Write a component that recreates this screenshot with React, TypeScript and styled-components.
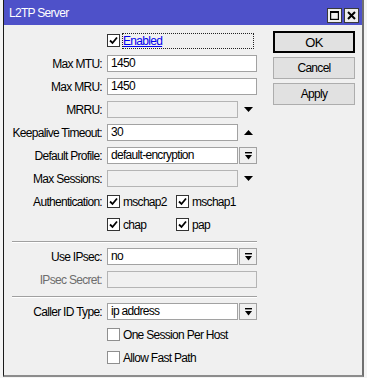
import styled, { createGlobalStyle } from "styled-components";

const GlobalStyle = createGlobalStyle`
  html, body {
    margin: 0;
    padding: 0;
    background: #f4f4f4;
  }
  body {
    font-family: "Liberation Sans", Arial, sans-serif;
    font-size: 12px;
    letter-spacing: -0.7px;
    color: #000;
  }
`;

const Window = styled.div`
  margin-left: 3px;
  width: 361px;
  height: 377px;
  box-sizing: border-box;
  display: flex;
  flex-direction: column;
  background: #f0f0f0;
  border-left: 1px solid #1a1a1a;
  border-right: 2px solid #707070;
  border-bottom: 2px solid #8c8c8c;
`;

const TitleBar = styled.div`
  height: 25px;
  flex: none;
  display: flex;
  align-items: center;
  justify-content: space-between;
  padding: 0 3px 0 5px;
  background: #4e51c9;
  color: #fff;
`;

const TitleText = styled.span`
  font-size: 12px;
  padding-top: 1px;
`;

const TitleButtons = styled.div`
  display: flex;
  gap: 2px;
  margin-top: 5px;
`;

const TitleButton = styled.div`
  width: 15px;
  height: 15px;
  box-sizing: border-box;
  border: 1px solid #3a3a3a;
  background: #eeeeee;
  display: flex;
  align-items: center;
  justify-content: center;
`;

const Body = styled.div`
  flex: 1;
  display: flex;
`;

const Form = styled.div`
  width: 258px;
  padding-top: 4px;
  display: flex;
  flex-direction: column;
`;

const Row = styled.div`
  height: 23px;
  display: flex;
  align-items: center;
`;

const Label = styled.div<{ $disabled?: boolean }>`
  width: 98px;
  padding-right: 5px;
  box-sizing: content-box;
  text-align: right;
  white-space: nowrap;
  color: ${(p) => (p.$disabled ? "#6d6d6d" : "#000")};
`;

const Field = styled.div<{ $short?: boolean; $disabled?: boolean }>`
  width: ${(p) => (p.$short ? "131px" : "150px")};
  height: 17px;
  box-sizing: border-box;
  border: 1px solid ${(p) => (p.$disabled ? "#b4b4b4" : "#a2a2a2")};
  background: ${(p) => (p.$disabled ? "#f0f0f0" : "#fff")};
  padding: 0 3px;
  line-height: 15px;
  white-space: nowrap;
  overflow: hidden;
`;

const ArrowSlot = styled.div`
  width: 19px;
  display: flex;
  justify-content: center;
  padding-left: 1px;
`;

const DropButton = styled.div`
  width: 18px;
  height: 17px;
  margin-left: 1px;
  box-sizing: border-box;
  border: 1px solid #a2a2a2;
  background: #f0f0f0;
  display: flex;
  align-items: center;
  justify-content: center;
`;

const CheckItem = styled.label<{ $width?: number }>`
  display: flex;
  align-items: center;
  gap: 3px;
  width: ${(p) => (p.$width ? `${p.$width}px` : "auto")};
  white-space: nowrap;
`;

const Box = styled.span<{ $checked?: boolean }>`
  width: 13px;
  height: 13px;
  box-sizing: border-box;
  border: 1px solid ${(p) => (p.$checked ? "#333" : "#8f8f8f")};
  background: #fff;
  display: flex;
  align-items: center;
  justify-content: center;
  flex: none;
`;

const FocusLabel = styled.span`
  width: 132px;
  height: 16px;
  box-sizing: border-box;
  border: 1px dotted #222;
  color: #0000ee;
  line-height: 14px;
  text-decoration: underline;
`;

const Separator = styled.div`
  margin: 5px 0 2px 8px;
  width: 245px;
  border-top: 1px solid #a0a0a0;
  border-bottom: 1px solid #fff;
`;

const ButtonColumn = styled.div`
  padding: 6px 0 0 11px;
  display: flex;
  flex-direction: column;
  gap: 4px;
`;

const Button = styled.div<{ $default?: boolean }>`
  width: 82px;
  height: 22px;
  box-sizing: border-box;
  border: ${(p) => (p.$default ? "2px solid #000" : "1px solid #adadad")};
  background: #e1e1e1;
  display: flex;
  align-items: center;
  justify-content: center;
  font-size: ${(p) => (p.$default ? "13px" : "12px")};
`;

const Check = () => (
  <svg width="9" height="9" viewBox="0 0 9 9">
    <path d="M1 4.5 L3.5 7 L8 1.5" fill="none" stroke="#000" strokeWidth="1.8" />
  </svg>
);

const CheckBox = ({ checked, label, width }: { checked?: boolean; label: string; width?: number }) => (
  <CheckItem $width={width}>
    <Box $checked={checked}>{checked && <Check />}</Box>
    {label}
  </CheckItem>
);

const Triangle = ({ up }: { up?: boolean }) => (
  <svg width="9" height="5" viewBox="0 0 9 5">
    <polygon points={up ? "0,5 9,5 4.5,0" : "0,0 9,0 4.5,5"} fill="#000" />
  </svg>
);

const DropIcon = () => (
  <svg width="7" height="8" viewBox="0 0 7 8">
    <rect x="0" y="0" width="7" height="1.4" fill="#000" />
    <polygon points="0,3 7,3 3.5,7.5" fill="#000" />
  </svg>
);

const Spacer = styled.div`
  width: 103px;
`;

const FieldRow = ({ label, value, short, disabled, trail }: {
  label: string;
  value?: string;
  short?: boolean;
  disabled?: boolean;
  trail?: "up" | "down" | "drop";
}) => (
  <Row>
    <Label $disabled={disabled && !trail}>{label}</Label>
    <Field $short={short} $disabled={disabled}>{value}</Field>
    {trail === "drop" && (
      <DropButton>
        <DropIcon />
      </DropButton>
    )}
    {(trail === "up" || trail === "down") && (
      <ArrowSlot>
        <Triangle up={trail === "up"} />
      </ArrowSlot>
    )}
  </Row>
);

export default function App() {
  return (
    <>
      <GlobalStyle />
      <Window>
        <TitleBar>
          <TitleText>L2TP Server</TitleText>
          <TitleButtons>
            <TitleButton>
              <svg width="9" height="9" viewBox="0 0 9 9">
                <rect x="0.6" y="0.6" width="7.8" height="7.8" fill="none" stroke="#000" strokeWidth="1.2" />
                <rect x="0" y="0" width="9" height="2" fill="#000" />
              </svg>
            </TitleButton>
            <TitleButton>
              <svg width="9" height="9" viewBox="0 0 9 9">
                <path d="M1 1 L8 8 M8 1 L1 8" stroke="#000" strokeWidth="2" />
              </svg>
            </TitleButton>
          </TitleButtons>
        </TitleBar>
        <Body>
          <Form>
            <Row>
              <Spacer />
              <Box $checked>
                <Check />
              </Box>
              <span style={{ width: 2 }} />
              <FocusLabel>Enabled</FocusLabel>
            </Row>
            <FieldRow label="Max MTU:" value="1450" />
            <FieldRow label="Max MRU:" value="1450" />
            <FieldRow label="MRRU:" short disabled trail="down" />
            <FieldRow label="Keepalive Timeout:" value="30" short trail="up" />
            <FieldRow label="Default Profile:" value="default-encryption" short trail="drop" />
            <FieldRow label="Max Sessions:" short disabled trail="down" />
            <Row>
              <Label>Authentication:</Label>
              <CheckBox checked label="mschap2" width={69} />
              <CheckBox checked label="mschap1" />
            </Row>
            <Row>
              <Spacer />
              <CheckBox checked label="chap" width={69} />
              <CheckBox checked label="pap" />
            </Row>
            <Separator />
            <FieldRow label="Use IPsec:" value="no" short trail="drop" />
            <FieldRow label="IPsec Secret:" disabled />
            <Separator />
            <FieldRow label="Caller ID Type:" value="ip address" short trail="drop" />
            <Row>
              <Spacer />
              <CheckBox label="One Session Per Host" />
            </Row>
            <Row>
              <Spacer />
              <CheckBox label="Allow Fast Path" />
            </Row>
          </Form>
          <ButtonColumn>
            <Button $default>OK</Button>
            <Button>Cancel</Button>
            <Button>Apply</Button>
          </ButtonColumn>
        </Body>
      </Window>
    </>
  );
}
